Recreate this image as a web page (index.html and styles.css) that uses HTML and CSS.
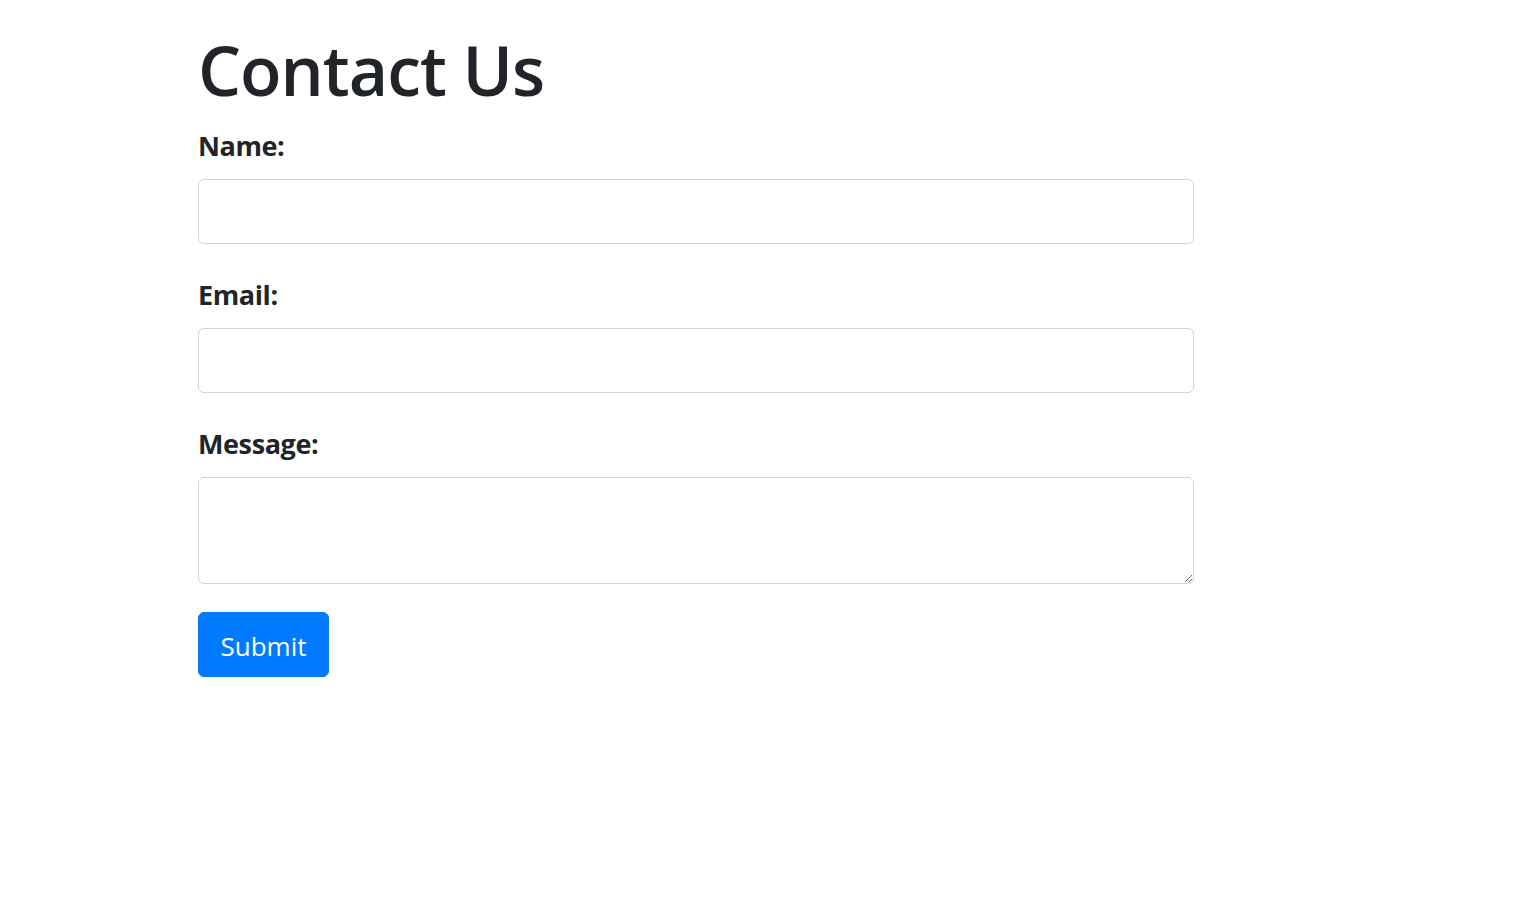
FILE: index.html
```html
<!DOCTYPE html>
<html lang="en">
<head>
<meta charset="utf-8">
<title>Contact Us</title>
<link rel="stylesheet" href="styles.css">
</head>
<body>
<main class="page">
  <h1 class="title">Contact Us</h1>
  <form class="form">
    <div class="group">
      <label class="label" for="name">Name:</label>
      <input class="control" type="text" id="name">
    </div>
    <div class="group">
      <label class="label" for="email">Email:</label>
      <input class="control" type="email" id="email">
    </div>
    <div class="group group-last">
      <label class="label" for="message">Message:</label>
      <textarea class="control area" id="message"></textarea>
    </div>
    <div class="actions">
      <button class="btn" type="submit">Submit</button>
    </div>
  </form>
</main>
</body>
</html>
```
FILE: styles.css
```css
* { box-sizing: border-box; }
html, body { margin: 0; background: #fff; }
body {
  font-family: "Open Sans", "Noto Sans", sans-serif;
  color: #212529;
}
.page {
  width: 996px;
  margin-left: 198px;
  padding-top: 29px;
}
.title {
  font-size: 68px;
  font-weight: 600;
  line-height: 1.2;
  margin: 0 0 17px;
  letter-spacing: -1px;
}
.form {
  display: flex;
  flex-direction: column;
}
.group {
  display: flex;
  flex-direction: column;
  margin-bottom: 33px;
}
.group-last { margin-bottom: 28px; }
.label {
  font-size: 27px;
  font-weight: 700;
  line-height: 36px;
  margin-bottom: 15px;
  letter-spacing: -0.4px;
}
.control {
  display: block;
  width: 100%;
  height: 65px;
  border: 1px solid #ced4da;
  border-radius: 6px;
  background: #fff;
  font: inherit;
  font-size: 25px;
  padding: 8px 16px;
  color: #495057;
}
.area {
  height: 107px;
  resize: vertical;
}
.actions { display: flex; }
.btn {
  width: 131px;
  height: 65px;
  background: #007bff;
  color: #fff;
  border: 1px solid #007bff;
  border-radius: 6px;
  font-family: inherit;
  font-size: 26px;
  font-weight: 400;
  padding: 3px 0 0;
  cursor: pointer;
}
```
